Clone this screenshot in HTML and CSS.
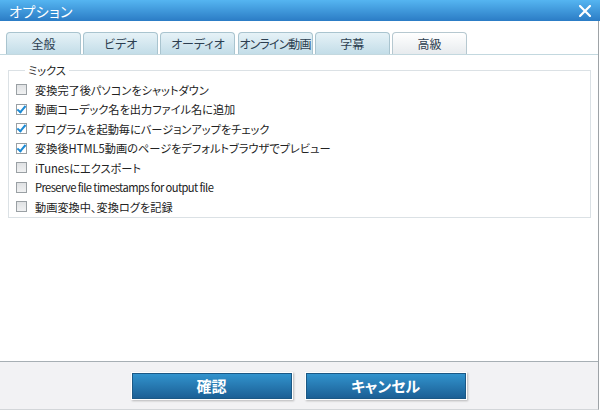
FILE: index.html
```html
<!DOCTYPE html>
<html lang="ja">
<head>
  <meta charset="UTF-8" />
  <title>オプション</title>
  <link rel="stylesheet" href="styles.css">
</head>
<body>

  <div class="titlebar">
    <span class="title">オプション</span>
    <svg class="close" width="12" height="12" viewBox="0 0 12 12">
      <path d="M1 1 L11 11 M11 1 L1 11" stroke="#fff" stroke-width="2.2" stroke-linecap="square" />
    </svg>
  </div>

  <div class="frame">
    <div class="tabs">
      <div class="tab">全般</div>
      <div class="tab">ビデオ</div>
      <div class="tab">オーディオ</div>
      <div class="tab tight">オンライン動画</div>
      <div class="tab">字幕</div>
      <div class="tab active">高級</div>
    </div>

    <div class="content">
      <fieldset class="group">
        <legend>ミックス</legend>
        <label class="row"><span class="box"></span>変換完了後パソコンをシャットダウン</label>
        <label class="row"><span class="box checked"></span>動画コーデック名を出力ファイル名に追加</label>
        <label class="row"><span class="box checked"></span>プログラムを起動毎にバージョンアップをチェック</label>
        <label class="row"><span class="box checked"></span>変換後HTML5動画のページをデフォルトブラウザでプレビュー</label>
        <label class="row"><span class="box"></span>iTunesにエクスポート</label>
        <label class="row latin"><span class="box"></span>Preserve file timestamps for output file</label>
        <label class="row"><span class="box"></span>動画変換中、変換ログを記録</label>
      </fieldset>
    </div>

    <div class="footer">
      <button class="btn">確認</button>
      <button class="btn">キャンセル</button>
    </div>
  </div>

</body>
</html>
```

FILE: styles.css
```css
body {
  margin: 0;
  width: 600px;
  height: 412px;
  background: #fff;
  font-family: "Noto Sans CJK JP", "Liberation Sans", sans-serif;
  font-size: 12px;
  color: #222;
  font-feature-settings: "palt";
  overflow: hidden;
}
.titlebar {
  height: 21px;
  background: linear-gradient(#55b5f1, #2b7cc5);
  display: flex;
  align-items: center;
  justify-content: space-between;
  padding: 0 9px 0 9px;
  box-sizing: border-box;
}
.title {
  color: #fff;
  font-size: 14px;
  letter-spacing: 0.5px;
}
.close {
  display: block;
}
.frame {
  width: 599px;
  height: 389px;
  box-sizing: border-box;
  border-right: 1px solid #9ea3a7;
  border-bottom: 1px solid #d3d6d9;
  display: flex;
  flex-direction: column;
}
.tabs {
  display: flex;
  gap: 2.2px;
  padding: 11px 0 0 6px;
  border-bottom: 1px solid #c3d8df;
}
.tab {
  width: 75px;
  height: 22px;
  box-sizing: border-box;
  border: 1px solid #a9c4cf;
  border-bottom: none;
  border-radius: 4px 4px 0 0;
  background: linear-gradient(#e6f2f7, #c3dde8);
  color: #2c3e50;
  display: flex;
  align-items: center;
  justify-content: center;
  white-space: nowrap;
}
.tab.tight {
  letter-spacing: -0.9px;
}
.tab.active {
  background: linear-gradient(#ffffff, #e7ebee);
  border-color: #b6c8d0;
}
.content {
  flex: 1;
  padding: 8px 8px 0 8px;
}
.group {
  margin: 0;
  padding: 3px 0 0 7px;
  border: 1px solid #dbe1e5;
  width: 583px;
  box-sizing: border-box;
  font-size: 11.2px;
}
.group legend {
  padding: 0 3px;
  margin-left: 9px;
  line-height: 14px;
}
.row {
  display: flex;
  align-items: center;
  height: 19.5px;
}
.row.latin {
  letter-spacing: -0.6px;
}
.box {
  width: 11px;
  height: 11px;
  flex: none;
  box-sizing: border-box;
  border: 1px solid #9aa0a4;
  background: linear-gradient(#e0e2e4, #f0f1f2);
  margin-right: 8px;
  position: relative;
}
.box.checked {
  background: #fff;
}
.box.checked::after {
  content: "";
  position: absolute;
  left: 1.5px;
  top: -1px;
  width: 3px;
  height: 7px;
  border: solid #1d8ad4;
  border-width: 0 2.2px 2.2px 0;
  transform: rotate(40deg);
}
.footer {
  height: 47px;
  border-top: 1px solid #a7afb4;
  background: #f2f2f4;
  display: flex;
  justify-content: center;
  align-items: center;
  gap: 14px;
  padding-right: 1px;
}
.btn {
  width: 160px;
  height: 26px;
  border: 1px solid #1b5885;
  background: linear-gradient(#3293cd, #1b5f95);
  color: #fff;
  font-family: inherit;
  font-feature-settings: "palt";
  font-size: 15px;
  font-weight: bold;
  box-shadow: 0 0 0 1px #fff, 1px 1px 2px 1px rgba(0, 0, 0, 0.25);
  cursor: pointer;
}
```
